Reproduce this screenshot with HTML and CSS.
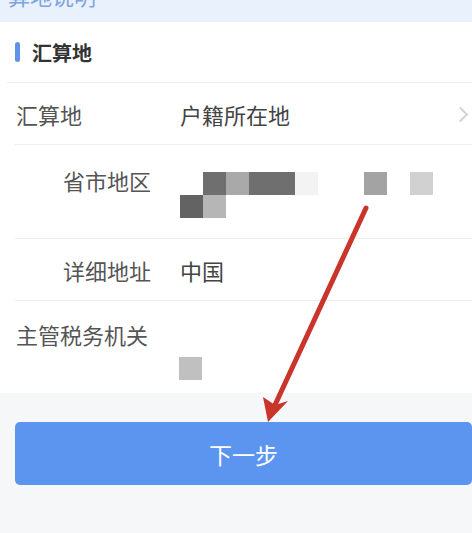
FILE: index.html
```html
<!DOCTYPE html>
<html lang="zh-CN">
<head>
    <meta charset="UTF-8">
    <meta name="viewport" content="width=device-width, initial-scale=1.0">
    <title>汇算地</title>
    <link rel="stylesheet" href="styles.css">
</head>
<body>
    <div class="top-band">
        <span class="band-link">算地说明</span>
    </div>
    <section class="card">
        <div class="card-title"><span class="bar"></span>汇算地</div>
        <div class="row">
            <div class="label">汇算地</div>
            <div class="value">户籍所在地</div>
            <span class="chev"></span>
        </div>
        <div class="row row-tall">
            <div class="label sub">省市地区</div>
            <div class="value">
                <div class="mosaic">
                    <i></i><i class="d"></i><i class="m"></i><i class="d"></i><i class="d"></i><i class="f"></i><i></i><i></i><i class="m2"></i><i></i><i class="l"></i>
                    <i class="d2"></i><i class="m3"></i>
                </div>
            </div>
        </div>
        <div class="row">
            <div class="label sub">详细地址</div>
            <div class="value">中国</div>
        </div>
        <div class="row row-stack">
            <div class="label">主管税务机关</div>
            <div class="value"><span class="blur-cell"></span></div>
        </div>
    </section>
    <div class="actions">
        <button class="btn-next">下一步</button>
    </div>
    <svg class="annot" width="472" height="533" viewBox="0 0 472 533">
        <line x1="366" y1="208" x2="275" y2="405" stroke="#c9342b" stroke-width="5" stroke-linecap="round"/>
        <polygon points="268,422 263,397 275,405 288,401" fill="#c9342b"/>
    </svg>
</body>
</html>
```

FILE: styles.css
```css
body {
    margin: 0;
    background-color: #f6f7f9;
    font-family: "Noto Sans CJK SC", "Noto Sans", sans-serif;
    color: #555;
    width: 472px;
    height: 533px;
    overflow: hidden;
    position: relative;
}
.top-band {
    height: 22px;
    background-color: #e9f1fc;
    overflow: hidden;
    padding-left: 8px;
}
.band-link {
    display: block;
    margin-top: -16px;
    font-size: 22px;
    line-height: 22px;
    color: #7ea4dc;
}
.card {
    background-color: #fff;
}
.card-title {
    height: 60px;
    margin-left: 7px;
    padding-left: 8px;
    display: flex;
    align-items: center;
    gap: 12px;
    font-size: 20px;
    font-weight: bold;
    color: #333;
    border-bottom: 1px solid #eeeeee;
}
.bar {
    width: 5px;
    height: 20px;
    border-radius: 3px;
    background-color: #5e93e8;
}
.row {
    margin-left: 15px;
    padding: 16px 0 15px;
    display: flex;
    align-items: flex-start;
    font-size: 22px;
    line-height: 30px;
    border-bottom: 1px solid #eeeeee;
}
.row:last-child {
    border-bottom: none;
}
.label {
    width: 164px;
    flex-shrink: 0;
    padding-left: 1px;
    color: #555;
}
.label.sub {
    width: 117px;
    padding-left: 48px;
}
.value {
    flex: 1;
    color: #444;
}
.chev {
    width: 9px;
    height: 9px;
    margin: 10px 6px 0 0;
    border-top: 2px solid #d4d4d4;
    border-right: 2px solid #d4d4d4;
    transform: rotate(45deg);
}
.row-tall {
    padding: 20px 0 20px;
}
.mosaic {
    margin-top: 7px;
    display: grid;
    grid-template-columns: repeat(11, 23px);
    grid-auto-rows: 23px;
}
.mosaic i {
    display: block;
}
.mosaic .d { background-color: #6f6f6f; }
.mosaic .d2 { background-color: #636363; }
.mosaic .m { background-color: #a9a9a9; }
.mosaic .m2 { background-color: #a3a3a3; }
.mosaic .m3 { background-color: #b6b6b6; }
.mosaic .l { background-color: #d1d1d1; }
.mosaic .f { background-color: #f3f3f3; }
.row-stack {
    flex-direction: column;
    padding: 18px 0 13px;
}
.row-stack .value {
    padding-left: 164px;
    margin-top: 8px;
}
.blur-cell {
    display: block;
    width: 23px;
    height: 23px;
    background-color: #c0c0c0;
}
.actions {
    padding: 29px 0 0 15px;
}
.btn-next {
    display: block;
    width: 457px;
    height: 63px;
    border: none;
    border-radius: 5px;
    background-color: #5b95f0;
    color: #fff;
    font-family: "Noto Sans CJK SC", sans-serif;
    font-size: 23px;
    cursor: pointer;
}
.annot {
    position: absolute;
    top: 0;
    left: 0;
    pointer-events: none;
}
```
